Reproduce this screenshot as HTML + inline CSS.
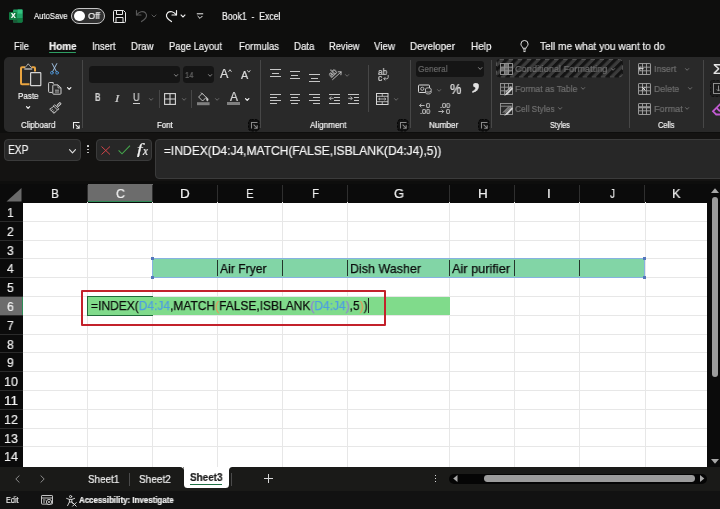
<!DOCTYPE html><html><head><meta charset="utf-8"><title>Book1 - Excel</title><style>
html,body{margin:0;padding:0;}
body{width:720px;height:509px;overflow:hidden;background:#0e0e0d;font-family:"Liberation Sans",sans-serif;position:relative;color:#fff;}
.a{position:absolute;}
.t{position:absolute;white-space:nowrap;line-height:1;transform-origin:0 50%;will-change:transform;-webkit-text-stroke:0.22px;}
svg{position:absolute;overflow:visible;}
</style></head><body>
<div class="a" style="left:3.7px;top:56.8px;width:730px;height:75.6px;background:#292929;border-radius:5px;"></div>
<div class="a" style="left:0px;top:132.5px;width:720px;height:48.5px;background:#141312;"></div>
<div class="a" style="left:0px;top:184px;width:720px;height:283px;background:#0a0a0a;"></div>
<div class="a" style="left:0px;top:467px;width:720px;height:23px;background:#141414;"></div>
<div class="a" style="left:0px;top:490px;width:720px;height:19px;background:#0b0b0b;"></div>
<svg style="left:9px;top:9px" width="14" height="14" viewBox="0 0 14 14">
<rect x="4" y="0.5" width="9.5" height="13" rx="1" fill="#21a366"/>
<rect x="8.7" y="0.5" width="4.8" height="4.3" fill="#33c481"/>
<rect x="8.7" y="4.8" width="4.8" height="4.3" fill="#21a366"/>
<rect x="8.7" y="9.1" width="4.8" height="4.4" rx="1" fill="#107c41"/>
<rect x="4" y="9.1" width="4.7" height="4.4" fill="#185c37"/>
<rect x="0" y="3" width="8" height="8" rx="1" fill="#107c41"/>
</svg>
<div class="a" style="left:71.3px;top:8px;width:32px;height:13.6px;border:1px solid #c4c4c4;border-radius:8px;background:#303030;"></div>
<div class="a" style="left:74.3px;top:10.7px;width:10.4px;height:10.4px;border-radius:50%;background:#fff;"></div>
<svg style="left:113px;top:10px" width="14" height="13" viewBox="0 0 14 13" fill="none" stroke="#e8e8e8" stroke-width="1">
<path d="M1.5 0.5 H10.5 L12.5 2.5 V11.5 A1 1 0 0 1 11.5 12.5 H1.5 A1 1 0 0 1 0.5 11.5 V1.5 A1 1 0 0 1 1.5 0.5 Z"/>
<path d="M3.5 0.5 V4.5 H9.5 V0.5"/>
<path d="M3 12.5 V7.5 H10 V12.5"/>
</svg>
<svg style="left:135px;top:9px" width="14" height="14" viewBox="0 0 14 14" fill="none" stroke="#585858" stroke-width="1.2" stroke-linecap="round" stroke-linejoin="round">
<path d="M1.5 1.5 V6 H6"/><path d="M1.8 5.8 C4 2.5 8 1.6 10.4 3.8 C12.6 6 11.5 9 9 10.8 L6.5 12.6"/>
</svg>
<svg style="left:150.5px;top:14px" width="6" height="4" viewBox="0 0 6 4" fill="none" stroke="#585858" stroke-width="1"><path d="M0.7 0.7 L3 3 L5.3 0.7"/></svg>
<svg style="left:164px;top:9px" width="14" height="14" viewBox="0 0 14 14" fill="none" stroke="#f0f0f0" stroke-width="1.2" stroke-linecap="round" stroke-linejoin="round">
<path d="M12.5 1.5 V6 H8"/><path d="M12.2 5.8 C10 2.5 6 1.6 3.6 3.8 C1.4 6 2.5 9 5 10.8 L7.5 12.6"/>
</svg>
<svg style="left:179.5px;top:14px" width="6" height="4" viewBox="0 0 6 4" fill="none" stroke="#f0f0f0" stroke-width="1.1"><path d="M0.7 0.7 L3 3 L5.3 0.7"/></svg>
<svg style="left:195.5px;top:13px" width="8" height="7" viewBox="0 0 8 7" fill="none" stroke="#f0f0f0" stroke-width="1"><path d="M0.8 0.8 H7.2"/><path d="M1.6 3 L4 5.4 L6.4 3"/></svg>
<div class="a" style="left:48.5px;top:52px;width:27.5px;height:1.3px;background:#2e9e63;border-radius:1px;"></div>
<svg style="left:519.6px;top:39.6px" width="9" height="12.5" viewBox="0 0 12 16.6" fill="none" stroke="#f0f0f0" stroke-width="1.25">
<path d="M3.8 11 C3.8 9 1.2 8 1.2 5.4 A4.8 4.8 0 0 1 10.8 5.4 C10.8 8 8.2 9 8.2 11 Z"/><path d="M4 13.2 H8 M4.6 15.4 H7.4"/>
</svg>
<svg style="left:19px;top:62px" width="24" height="26" viewBox="0 0 24 26" fill="none">
<path d="M6 5.2 H3 A1 1 0 0 0 2 6.2 V21.2 A1 1 0 0 0 3 22.2 H10.5" stroke="#e9a440" stroke-width="2"/>
<path d="M12.5 5.2 H15 A1 1 0 0 1 16 6.2 V9.5" stroke="#e9a440" stroke-width="2"/>
<path d="M5.3 7 H13.2" stroke="#9a9a9a" stroke-width="1.8"/>
<path d="M5.8 5.8 L7.6 3.8 L9.25 1.8 L10.9 3.8 L12.7 5.8" stroke="#c4c4c4" stroke-width="0.9"/>
<rect x="11.6" y="10.6" width="10.2" height="13" rx="0.6" stroke="#d4d4d4" stroke-width="1.2" fill="#2e2e2e"/>
</svg>
<svg style="left:26px;top:105.5px" width="4.2" height="3.4" viewBox="0 0 4.2 3.4" fill="none" stroke="#f2f2f2" stroke-width="1.2" stroke-linecap="round" stroke-linejoin="round"><path d="M0.5 0.6 L2.1 2.4 L3.7 0.6"/></svg>
<svg style="left:50px;top:63px" width="10" height="12" viewBox="0 0 10 12" fill="none" stroke-linecap="round">
<path d="M2.2 0.6 L6.4 8.6 M6.8 0.6 L2.6 8.6" stroke="#a9cdf0" stroke-width="0.9"/><circle cx="1.9" cy="9.8" r="1.35" stroke="#4d95d8" stroke-width="0.9"/><circle cx="7.1" cy="9.8" r="1.35" stroke="#4d95d8" stroke-width="0.9"/>
</svg>
<svg style="left:48px;top:82px" width="14" height="13" viewBox="0 0 14 13" fill="none" stroke="#d0d0d0" stroke-width="1">
<path d="M4.6 10.4 H1.4 A0.8 0.8 0 0 1 0.6 9.6 V1.3 A0.8 0.8 0 0 1 1.4 0.5 H5.2 V2"/>
<path d="M5.6 2.9 H10 L13 5.9 V11.4 A0.8 0.8 0 0 1 12.2 12.2 H5.6 A0.8 0.8 0 0 1 4.8 11.4 V3.7 A0.8 0.8 0 0 1 5.6 2.9 Z" fill="#2c2c2c"/>
<path d="M10 2.9 V5.9 H13" stroke-width="0.8"/><path d="M7 8.2 H11 M7 10 H11" stroke-width="0.8"/>
</svg>
<svg style="left:66.8px;top:87.4px" width="4.4" height="3.4" viewBox="0 0 4.4 3.4" fill="none" stroke="#f2f2f2" stroke-width="1.2" stroke-linecap="round" stroke-linejoin="round"><path d="M0.5 0.6 L2.2 2.4 L3.9000000000000004 0.6"/></svg>
<svg style="left:49px;top:101.5px" width="13" height="12" viewBox="0 0 13 12" fill="none" stroke="#cfcfcf" stroke-width="0.9" stroke-linejoin="round" stroke-linecap="round">
<path d="M11.6 1 L8.6 4"/><path d="M10.9 0.6 L12.2 1.9 L9.4 4.7 L8.1 3.4 Z" fill="#777"/>
<path d="M5.9 3 L9.8 6.9 L8.6 8.1 L4.7 4.2 Z"/>
<path d="M4.7 4.4 L0.7 7.2 L5.2 11.3 L8.4 8"/><path d="M2.2 8.5 L3.6 7.3 M3.6 9.8 L5 8.6 M5 10.9 L6.2 9.8" stroke-width="0.7"/>
</svg>
<svg style="left:73px;top:122px" width="7" height="7" viewBox="0 0 7 7" fill="none" stroke="#f0f0f0" stroke-width="1.05"><path d="M6.5 0.5 H0.5 V6.5"/><path d="M2.6 2.6 L6 6 M6.2 3.2 V6.2 H3.2"/></svg>
<div class="a" style="left:81.5px;top:60px;width:1px;height:68.19999999999999px;background:#474747;"></div>
<div class="a" style="left:88.5px;top:66.3px;width:91.5px;height:16.5px;background:#151515;border-radius:3.5px;"></div>
<svg style="left:173.6px;top:74px" width="4.2" height="3.3" viewBox="0 0 4.2 3.3" fill="none" stroke="#8a8a8a" stroke-width="1" stroke-linecap="round" stroke-linejoin="round"><path d="M0.5 0.6 L2.1 2.3 L3.7 0.6"/></svg>
<div class="a" style="left:182.8px;top:66.3px;width:31px;height:16.5px;background:#151515;border-radius:3.5px;"></div>
<svg style="left:207.8px;top:74px" width="4.2" height="3.3" viewBox="0 0 4.2 3.3" fill="none" stroke="#8a8a8a" stroke-width="1" stroke-linecap="round" stroke-linejoin="round"><path d="M0.5 0.6 L2.1 2.3 L3.7 0.6"/></svg>
<svg style="left:227.5px;top:69px" width="4" height="3.4" viewBox="0 0 4 3.4"><rect width="4" height="3.4" fill="#292929"/><path d="M0.5 2.8 L2 0.7 L3.5 2.8" fill="none" stroke="#dcdcdc" stroke-width="0.9"/></svg>
<svg style="left:247.2px;top:69.6px" width="3.6" height="3.2" viewBox="0 0 3.6 3.2" fill="none" stroke="#dcdcdc" stroke-width="0.9" stroke-linecap="round" stroke-linejoin="round"><path d="M0.5 0.6 L1.8 2.2 L3.1 0.6"/></svg>
<div class="a" style="left:132.8px;top:103.4px;width:7.2px;height:0.9px;background:#cfcfcf;"></div>
<svg style="left:148.8px;top:98px" width="4.2" height="3.3" viewBox="0 0 4.2 3.3" fill="none" stroke="#6a6a6a" stroke-width="1" stroke-linecap="round" stroke-linejoin="round"><path d="M0.5 0.6 L2.1 2.3 L3.7 0.6"/></svg>
<div class="a" style="left:158.5px;top:90px;width:1px;height:17.5px;background:#474747;"></div>
<svg style="left:163.5px;top:93px" width="12" height="12" viewBox="0 0 12 12" fill="none" stroke="#d6d6d6" stroke-width="1.1"><rect x="0.6" y="0.6" width="10.8" height="10.8"/><path d="M6 0.6 V11.4 M0.6 6 H11.4"/></svg>
<svg style="left:181.6px;top:98px" width="4.2" height="3.3" viewBox="0 0 4.2 3.3" fill="none" stroke="#6a6a6a" stroke-width="1" stroke-linecap="round" stroke-linejoin="round"><path d="M0.5 0.6 L2.1 2.3 L3.7 0.6"/></svg>
<div class="a" style="left:191px;top:90px;width:1px;height:17.5px;background:#474747;"></div>
<svg style="left:196.5px;top:92px" width="13" height="13.5" viewBox="0 0 13 13.5" fill="none" stroke="#d0d0d0" stroke-width="0.9" stroke-linejoin="round">
<path d="M5.2 1.4 L9.2 5.4 L5.6 9 L1.6 5 Z"/><path d="M4 0.6 L5.8 2.4"/><path d="M9.3 5 C11 6.4 11.6 7.4 11 8.6 C10.4 9.2 9.6 8.8 9.6 8 Z" fill="#d0d0d0" stroke-width="0.5"/>
<rect x="0" y="10.2" width="12.6" height="3" fill="#808080" stroke="none"/>
</svg>
<svg style="left:214.6px;top:98px" width="4.2" height="3.3" viewBox="0 0 4.2 3.3" fill="none" stroke="#6a6a6a" stroke-width="1" stroke-linecap="round" stroke-linejoin="round"><path d="M0.5 0.6 L2.1 2.3 L3.7 0.6"/></svg>
<div class="a" style="left:227.3px;top:102.2px;width:12.7px;height:3px;background:#808080;"></div>
<svg style="left:245.4px;top:98px" width="4.4" height="3.4" viewBox="0 0 4.4 3.4" fill="none" stroke="#f2f2f2" stroke-width="1.2" stroke-linecap="round" stroke-linejoin="round"><path d="M0.5 0.6 L2.2 2.4 L3.9000000000000004 0.6"/></svg>
<svg style="left:247.7px;top:119px" width="12" height="12.5" viewBox="0 0 12 12.5"><rect x="0.5" y="0.5" width="10.6" height="11.5" rx="3" fill="#121212" stroke="#050505" stroke-width="1" stroke-dasharray="2.2 1.4"/></svg>
<svg style="left:251px;top:122px" width="7" height="7" viewBox="0 0 7 7" fill="none" stroke="#8a8a8a" stroke-width="1.05"><path d="M6.5 0.5 H0.5 V6.5"/><path d="M2.6 2.6 L6 6 M6.2 3.2 V6.2 H3.2"/></svg>
<div class="a" style="left:259.5px;top:60px;width:1px;height:68.19999999999999px;background:#474747;"></div>
<div class="a" style="left:270.0px;top:69.3px;width:10.6px;height:1px;background:#c6c6c6;"></div>
<div class="a" style="left:271.8px;top:72.5px;width:7px;height:1px;background:#c6c6c6;"></div>
<div class="a" style="left:270.0px;top:75.7px;width:10.6px;height:1px;background:#c6c6c6;"></div>
<div class="a" style="left:289.5px;top:71.3px;width:10.6px;height:1px;background:#c6c6c6;"></div>
<div class="a" style="left:291.3px;top:74.5px;width:7px;height:1px;background:#c6c6c6;"></div>
<div class="a" style="left:289.5px;top:77.7px;width:10.6px;height:1px;background:#c6c6c6;"></div>
<div class="a" style="left:309.3px;top:74.3px;width:10.6px;height:1px;background:#c6c6c6;"></div>
<div class="a" style="left:311.1px;top:77.5px;width:7px;height:1px;background:#c6c6c6;"></div>
<div class="a" style="left:309.3px;top:80.7px;width:10.6px;height:1px;background:#c6c6c6;"></div>
<svg style="left:327.5px;top:68px" width="14" height="13" viewBox="0 0 14 13" fill="none" stroke="#c6c6c6" stroke-width="0.9" stroke-linecap="round">
<path d="M4.6 11.6 L13 4"/><path d="M10.2 3.8 L13.2 3.8 L12.9 6.8"/>
</svg>
<svg style="left:345.3px;top:74px" width="4.2" height="3.3" viewBox="0 0 4.2 3.3" fill="none" stroke="#6a6a6a" stroke-width="1" stroke-linecap="round" stroke-linejoin="round"><path d="M0.5 0.6 L2.1 2.3 L3.7 0.6"/></svg>
<div class="a" style="left:270px;top:93.5px;width:10.6px;height:1px;background:#c6c6c6;"></div>
<div class="a" style="left:270px;top:96.6px;width:7.4px;height:1px;background:#c6c6c6;"></div>
<div class="a" style="left:270px;top:99.7px;width:10.6px;height:1px;background:#c6c6c6;"></div>
<div class="a" style="left:270px;top:102.8px;width:7.4px;height:1px;background:#c6c6c6;"></div>
<div class="a" style="left:289.5px;top:93.5px;width:10.6px;height:1px;background:#c6c6c6;"></div>
<div class="a" style="left:291.1px;top:96.6px;width:7.4px;height:1px;background:#c6c6c6;"></div>
<div class="a" style="left:289.5px;top:99.7px;width:10.6px;height:1px;background:#c6c6c6;"></div>
<div class="a" style="left:291.1px;top:102.8px;width:7.4px;height:1px;background:#c6c6c6;"></div>
<div class="a" style="left:309.3px;top:93.5px;width:10.6px;height:1px;background:#c6c6c6;"></div>
<div class="a" style="left:312.5px;top:96.6px;width:7.4px;height:1px;background:#c6c6c6;"></div>
<div class="a" style="left:309.3px;top:99.7px;width:10.6px;height:1px;background:#c6c6c6;"></div>
<div class="a" style="left:312.5px;top:102.8px;width:7.4px;height:1px;background:#c6c6c6;"></div>
<div class="a" style="left:328.8px;top:93.5px;width:11.2px;height:1px;background:#c6c6c6;"></div>
<div class="a" style="left:334.4px;top:96.6px;width:5.6px;height:1px;background:#c6c6c6;"></div>
<div class="a" style="left:334.4px;top:99.7px;width:5.6px;height:1px;background:#c6c6c6;"></div>
<div class="a" style="left:328.8px;top:102.8px;width:11.2px;height:1px;background:#c6c6c6;"></div>
<svg style="left:328.8px;top:96.4px" width="5" height="4.6" viewBox="0 0 5 4.6" fill="none" stroke="#c6c6c6" stroke-width="0.9"><path d="M4.6 2.3 H0.6 M2.2 0.5 L0.5 2.3 L2.2 4.1"/></svg>
<div class="a" style="left:348.2px;top:93.5px;width:11.2px;height:1px;background:#c6c6c6;"></div>
<div class="a" style="left:353.8px;top:96.6px;width:5.6px;height:1px;background:#c6c6c6;"></div>
<div class="a" style="left:353.8px;top:99.7px;width:5.6px;height:1px;background:#c6c6c6;"></div>
<div class="a" style="left:348.2px;top:102.8px;width:11.2px;height:1px;background:#c6c6c6;"></div>
<svg style="left:348.2px;top:96.4px" width="5" height="4.6" viewBox="0 0 5 4.6" fill="none" stroke="#c6c6c6" stroke-width="0.9"><path d="M0.2 2.3 H4.2 M2.6 0.5 L4.3 2.3 L2.6 4.1"/></svg>
<div class="a" style="left:368.1px;top:64.5px;width:1px;height:47.5px;background:#474747;"></div>
<svg style="left:382.6px;top:74.5px" width="6" height="6.5" viewBox="0 0 6 6.5" fill="none" stroke="#d6d6d6" stroke-width="0.8"><path d="M5.2 0 V2.4 A1.4 1.4 0 0 1 3.8 3.8 H0.8"/><path d="M2.3 2.2 L0.7 3.8 L2.3 5.4"/></svg>
<svg style="left:375.5px;top:93px" width="12.5" height="12" viewBox="0 0 12.5 12" fill="none" stroke="#d6d6d6" stroke-width="1">
<rect x="0.5" y="0.5" width="11.5" height="11"/><path d="M0.5 3.3 H12 M0.5 8.7 H12 M6.25 0.5 V3.3 M6.25 8.7 V11.5" stroke-width="0.8"/>
<path d="M2.6 6 H9.9 M4 4.8 L2.7 6 L4 7.2 M8.5 4.8 L9.8 6 L8.5 7.2" stroke-width="0.8"/></svg>
<svg style="left:394px;top:98.4px" width="4.2" height="3.3" viewBox="0 0 4.2 3.3" fill="none" stroke="#6a6a6a" stroke-width="1" stroke-linecap="round" stroke-linejoin="round"><path d="M0.5 0.6 L2.1 2.3 L3.7 0.6"/></svg>
<svg style="left:396.7px;top:119px" width="12" height="12.5" viewBox="0 0 12 12.5"><rect x="0.5" y="0.5" width="10.6" height="11.5" rx="3" fill="#121212" stroke="#050505" stroke-width="1" stroke-dasharray="2.2 1.4"/></svg>
<svg style="left:400px;top:122px" width="7" height="7" viewBox="0 0 7 7" fill="none" stroke="#8a8a8a" stroke-width="1.05"><path d="M6.5 0.5 H0.5 V6.5"/><path d="M2.6 2.6 L6 6 M6.2 3.2 V6.2 H3.2"/></svg>
<div class="a" style="left:409.5px;top:60px;width:1px;height:68.19999999999999px;background:#474747;"></div>
<div class="a" style="left:415.5px;top:60.5px;width:68.5px;height:16px;background:#151515;border-radius:3px;"></div>
<svg style="left:478px;top:67.4px" width="4.4" height="3.4" viewBox="0 0 4.4 3.4" fill="none" stroke="#8a8a8a" stroke-width="1" stroke-linecap="round" stroke-linejoin="round"><path d="M0.5 0.6 L2.2 2.4 L3.9000000000000004 0.6"/></svg>
<svg style="left:418px;top:84px" width="14" height="11" viewBox="0 0 14 11" fill="none" stroke="#d6d6d6" stroke-width="1">
<rect x="0.5" y="1" width="11" height="7.5" rx="0.8"/><circle cx="4.3" cy="4.8" r="1.6" stroke-width="0.8"/>
<ellipse cx="10.3" cy="5" rx="2.8" ry="1.2" fill="#292929" stroke-width="0.8"/><path d="M7.5 5 V8.8 C7.5 10.4 13.1 10.4 13.1 8.8 V5 M7.5 7 C7.5 8.5 13.1 8.5 13.1 7" stroke-width="0.8" fill="#292929"/></svg>
<svg style="left:436.7px;top:88.6px" width="4.2" height="3.3" viewBox="0 0 4.2 3.3" fill="none" stroke="#6a6a6a" stroke-width="1" stroke-linecap="round" stroke-linejoin="round"><path d="M0.5 0.6 L2.1 2.3 L3.7 0.6"/></svg>
<svg style="left:418.8px;top:103.3px" width="6" height="5" viewBox="0 0 6 5" fill="none" stroke="#d6d6d6" stroke-width="0.8"><path d="M0.6 2.5 H5.6 M2.4 0.7 L0.6 2.5 L2.4 4.3"/></svg>
<svg style="left:438px;top:109.2px" width="6.5" height="5" viewBox="0 0 6.5 5" fill="none" stroke="#d6d6d6" stroke-width="0.8"><path d="M0.4 2.5 H5.6 M3.8 0.7 L5.6 2.5 L3.8 4.3"/></svg>
<svg style="left:477.7px;top:119px" width="12" height="12.5" viewBox="0 0 12 12.5"><rect x="0.5" y="0.5" width="10.6" height="11.5" rx="3" fill="#121212" stroke="#050505" stroke-width="1" stroke-dasharray="2.2 1.4"/></svg>
<svg style="left:481px;top:122px" width="7" height="7" viewBox="0 0 7 7" fill="none" stroke="#8a8a8a" stroke-width="1.05"><path d="M6.5 0.5 H0.5 V6.5"/><path d="M2.6 2.6 L6 6 M6.2 3.2 V6.2 H3.2"/></svg>
<div class="a" style="left:490.5px;top:60px;width:1px;height:68.19999999999999px;background:#474747;"></div>
<svg style="left:496px;top:59.2px" width="127" height="18.4" viewBox="0 0 127 18.4">
<defs><pattern id="hatch" width="6.4" height="6.4" patternUnits="userSpaceOnUse" patternTransform="rotate(45)"><rect width="6.4" height="6.4" fill="#3b3b3b"/><rect width="3.2" height="6.4" fill="#131313"/></pattern></defs>
<rect x="0.5" y="0.5" width="126" height="17.4" rx="3" fill="url(#hatch)"/>
<rect x="0.5" y="0.5" width="126" height="17.4" rx="3" fill="none" stroke="#161616" stroke-width="1"/>
<rect x="0.5" y="0.5" width="126" height="17.4" rx="3" fill="none" stroke="#5c5c5c" stroke-width="0.9" stroke-dasharray="4.5 4.6"/></svg>
<svg style="left:499.5px;top:63px" width="13" height="12" viewBox="0 0 13 12" fill="none" stroke="#9a9a9a" stroke-width="0.9">
<rect x="0.5" y="0.5" width="12" height="11"/><path d="M4.5 0.5 V11.5 M8.5 0.5 V11.5 M0.5 4.2 H12.5 M0.5 7.8 H12.5"/><rect x="4.5" y="0.5" width="4" height="11" fill="#8a8a8a" stroke="none" opacity="0.7"/><rect x="0.5" y="4.2" width="4" height="3.6" fill="#8a8a8a" stroke="none" opacity="0.7"/></svg>
<svg style="left:611px;top:67.6px" width="4.2" height="3.3" viewBox="0 0 4.2 3.3" fill="none" stroke="#6e6e6e" stroke-width="1" stroke-linecap="round" stroke-linejoin="round"><path d="M0.5 0.6 L2.1 2.3 L3.7 0.6"/></svg>
<svg style="left:499.5px;top:83px" width="13" height="12" viewBox="0 0 13 12" fill="none" stroke="#9a9a9a" stroke-width="0.9">
<rect x="0.5" y="0.5" width="12" height="11"/><path d="M4.5 0.5 V11.5 M8.5 0.5 V6 M0.5 4.2 H12.5 M0.5 7.8 H7"/><path d="M12.3 4.5 L6.5 10.3 L5.6 11.6 L7.2 11 L12.8 5.4" stroke-width="1.1" stroke="#d0d0d0"/><path d="M11.3 3.5 L5.5 9.3" stroke-width="1.1" stroke="#b8b8b8"/></svg>
<svg style="left:581px;top:87.4px" width="4.2" height="3.3" viewBox="0 0 4.2 3.3" fill="none" stroke="#6e6e6e" stroke-width="1" stroke-linecap="round" stroke-linejoin="round"><path d="M0.5 0.6 L2.1 2.3 L3.7 0.6"/></svg>
<svg style="left:499.5px;top:102.5px" width="13" height="12" viewBox="0 0 13 12" fill="none" stroke="#9a9a9a" stroke-width="0.9">
<rect x="0.5" y="0.5" width="12" height="11"/><path d="M0.5 3.2 H12.5"/><path d="M12.3 4.5 L6.5 10.3 L5.6 11.6 L7.2 11 L12.8 5.4" stroke-width="1.1" stroke="#d0d0d0"/><path d="M11 3.6 L4.5 10 M9 3.6 L3 9.6" stroke-width="1" stroke="#b8b8b8"/></svg>
<svg style="left:557.6px;top:107px" width="4.2" height="3.3" viewBox="0 0 4.2 3.3" fill="none" stroke="#6e6e6e" stroke-width="1" stroke-linecap="round" stroke-linejoin="round"><path d="M0.5 0.6 L2.1 2.3 L3.7 0.6"/></svg>
<div class="a" style="left:629px;top:60px;width:1px;height:68.19999999999999px;background:#474747;"></div>
<svg style="left:638px;top:63.3px" width="13" height="12" viewBox="0 0 13 12" fill="none" stroke="#a4a4a4" stroke-width="0.9">
<rect x="0.5" y="0.5" width="12" height="11" rx="0.6"/><path d="M4.5 0.5 V11.5 M8.5 0.5 V11.5 M0.5 4.2 H12.5 M0.5 7.8 H12.5"/><path d="M5.6 5.6 H1 M2.6 4 L0.9 5.6 L2.6 7.2" stroke="#e0e0e0" stroke-width="0.9"/></svg>
<svg style="left:685.4px;top:67.6px" width="4.2" height="3.3" viewBox="0 0 4.2 3.3" fill="none" stroke="#6e6e6e" stroke-width="1" stroke-linecap="round" stroke-linejoin="round"><path d="M0.5 0.6 L2.1 2.3 L3.7 0.6"/></svg>
<svg style="left:638px;top:83px" width="13" height="12" viewBox="0 0 13 12" fill="none" stroke="#a4a4a4" stroke-width="0.9">
<rect x="0.5" y="0.5" width="12" height="11" rx="0.6"/><path d="M4.5 0.5 V11.5 M8.5 0.5 V11.5 M0.5 4.2 H12.5 M0.5 7.8 H12.5"/><path d="M4 4 L7.4 7.4 M7.4 4 L4 7.4" stroke="#e0e0e0" stroke-width="1"/></svg>
<svg style="left:688.4px;top:87.4px" width="4.2" height="3.3" viewBox="0 0 4.2 3.3" fill="none" stroke="#6e6e6e" stroke-width="1" stroke-linecap="round" stroke-linejoin="round"><path d="M0.5 0.6 L2.1 2.3 L3.7 0.6"/></svg>
<svg style="left:638px;top:102.5px" width="13" height="12" viewBox="0 0 13 12" fill="none" stroke="#a4a4a4" stroke-width="0.9">
<rect x="0.5" y="0.5" width="12" height="11" rx="0.6"/><path d="M4.5 0.5 V11.5 M8.5 0.5 V11.5 M0.5 4.2 H12.5 M0.5 7.8 H12.5"/><rect x="0.8" y="3.3" width="11.4" height="2" fill="#999" stroke="none"/></svg>
<svg style="left:685.4px;top:107px" width="4.2" height="3.3" viewBox="0 0 4.2 3.3" fill="none" stroke="#6e6e6e" stroke-width="1" stroke-linecap="round" stroke-linejoin="round"><path d="M0.5 0.6 L2.1 2.3 L3.7 0.6"/></svg>
<div class="a" style="left:703px;top:60px;width:1px;height:68.19999999999999px;background:#474747;"></div>
<svg style="left:709.5px;top:80px" width="12" height="17" viewBox="0 0 12 17"><rect x="0.5" y="0.5" width="14" height="16" rx="2" fill="#1c1c1c" stroke="#111" stroke-dasharray="2.5 1.5"/><rect x="3.5" y="3.5" width="10" height="10" fill="none" stroke="#9a9a9a" stroke-width="0.9"/><path d="M8.5 5.5 V11 M6.8 9.4 L8.5 11.1 L10.2 9.4" fill="none" stroke="#9a9a9a" stroke-width="0.9"/></svg>
<svg style="left:712px;top:103px" width="8" height="12" viewBox="0 0 8 12" fill="none" stroke="#c25bd2" stroke-width="1.8"><path d="M8.5 0.8 L1 8.3 L4.2 11.5 H9"/><path d="M4.5 4.8 L8 8.3"/></svg>
<div class="a" style="left:3.5px;top:138.5px;width:77px;height:22px;background:#272727;border:1px solid #3b3b3b;box-sizing:border-box;border-radius:4px;"></div>
<svg style="left:69px;top:148.8px" width="7" height="4.8" viewBox="0 0 7 4.8" fill="none" stroke="#e0e0e0" stroke-width="1.1" stroke-linecap="round" stroke-linejoin="round"><path d="M0.5 0.6 L3.5 3.8 L6.5 0.6"/></svg>
<div class="a" style="left:87.2px;top:145.4px;width:1.8px;height:1.8px;background:#d8d8d8;border-radius:0.5px;"></div>
<div class="a" style="left:87.2px;top:148.5px;width:1.8px;height:1.8px;background:#d8d8d8;border-radius:0.5px;"></div>
<div class="a" style="left:87.2px;top:151.6px;width:1.8px;height:1.8px;background:#d8d8d8;border-radius:0.5px;"></div>
<div class="a" style="left:95.7px;top:138.5px;width:56px;height:22px;background:#272727;border:1px solid #3b3b3b;box-sizing:border-box;border-radius:4px;"></div>
<svg style="left:100.7px;top:145.5px" width="9.5" height="9" viewBox="0 0 9.5 9" fill="none" stroke="#d8454a" stroke-width="0.95"><path d="M0.5 0.5 L9 8.5 M9 0.5 L0.5 8.5"/></svg>
<svg style="left:117.5px;top:145px" width="12.5" height="9.5" viewBox="0 0 12.5 9.5" fill="none" stroke="#45a84c" stroke-width="1.05"><path d="M0.6 5.4 L4 8.8 L12 0.6"/></svg>
<div class="a" style="left:154.5px;top:138.5px;width:580px;height:40.7px;background:#272727;border:1px solid #3b3b3b;box-sizing:border-box;border-radius:4px;"></div>
<div class="a" style="left:23px;top:202.70000000000002px;width:684px;height:264.3px;background:#fff;"></div>
<div class="a" style="left:0px;top:184.2px;width:707px;height:18.6px;background:#0b0b0b;"></div>
<div class="a" style="left:87.5px;top:184.3px;width:65px;height:18.1px;background:#6c6c6c;border-bottom:1.3px solid #2e8b57;box-sizing:border-box;"></div>
<div class="a" style="left:87px;top:185px;width:1px;height:17px;background:#2f2f2f;"></div>
<div class="a" style="left:152px;top:185px;width:1px;height:17px;background:#2f2f2f;"></div>
<div class="a" style="left:217px;top:185px;width:1px;height:17px;background:#2f2f2f;"></div>
<div class="a" style="left:282px;top:185px;width:1px;height:17px;background:#2f2f2f;"></div>
<div class="a" style="left:347px;top:185px;width:1px;height:17px;background:#2f2f2f;"></div>
<div class="a" style="left:449px;top:185px;width:1px;height:17px;background:#2f2f2f;"></div>
<div class="a" style="left:514px;top:185px;width:1px;height:17px;background:#2f2f2f;"></div>
<div class="a" style="left:579px;top:185px;width:1px;height:17px;background:#2f2f2f;"></div>
<div class="a" style="left:644px;top:185px;width:1px;height:17px;background:#2f2f2f;"></div>
<svg style="left:6px;top:188px" width="16" height="14" viewBox="0 0 16 14"><path d="M15.5 0 V13.5 H0.5 Z" fill="#6a6a6a"/></svg>
<div class="a" style="left:0px;top:202.4px;width:23px;height:264.6px;background:#0b0b0b;"></div>
<div class="a" style="left:0px;top:296.4px;width:23px;height:18.8px;background:#6c6c6c;border-right:1.3px solid #2e8b57;box-sizing:border-box;"></div>
<div class="a" style="left:0px;top:220.70000000000002px;width:23px;height:1px;background:#2b2b2b;"></div>
<div class="a" style="left:0px;top:239.5px;width:23px;height:1px;background:#2b2b2b;"></div>
<div class="a" style="left:0px;top:258.3px;width:23px;height:1px;background:#2b2b2b;"></div>
<div class="a" style="left:0px;top:277.1px;width:23px;height:1px;background:#2b2b2b;"></div>
<div class="a" style="left:0px;top:295.9px;width:23px;height:1px;background:#2b2b2b;"></div>
<div class="a" style="left:0px;top:314.70000000000005px;width:23px;height:1px;background:#2b2b2b;"></div>
<div class="a" style="left:0px;top:333.5px;width:23px;height:1px;background:#2b2b2b;"></div>
<div class="a" style="left:0px;top:352.3px;width:23px;height:1px;background:#2b2b2b;"></div>
<div class="a" style="left:0px;top:371.1px;width:23px;height:1px;background:#2b2b2b;"></div>
<div class="a" style="left:0px;top:389.9px;width:23px;height:1px;background:#2b2b2b;"></div>
<div class="a" style="left:0px;top:408.70000000000005px;width:23px;height:1px;background:#2b2b2b;"></div>
<div class="a" style="left:0px;top:427.5px;width:23px;height:1px;background:#2b2b2b;"></div>
<div class="a" style="left:0px;top:446.3px;width:23px;height:1px;background:#2b2b2b;"></div>
<div class="a" style="left:23px;top:221px;width:684px;height:1px;background:#e7e7e7;"></div>
<div class="a" style="left:23px;top:240px;width:684px;height:1px;background:#e7e7e7;"></div>
<div class="a" style="left:23px;top:258px;width:684px;height:1px;background:#e7e7e7;"></div>
<div class="a" style="left:23px;top:277px;width:684px;height:1px;background:#e7e7e7;"></div>
<div class="a" style="left:23px;top:296px;width:684px;height:1px;background:#e7e7e7;"></div>
<div class="a" style="left:23px;top:315px;width:684px;height:1px;background:#e7e7e7;"></div>
<div class="a" style="left:23px;top:334px;width:684px;height:1px;background:#e7e7e7;"></div>
<div class="a" style="left:23px;top:352px;width:684px;height:1px;background:#e7e7e7;"></div>
<div class="a" style="left:23px;top:371px;width:684px;height:1px;background:#e7e7e7;"></div>
<div class="a" style="left:23px;top:390px;width:684px;height:1px;background:#e7e7e7;"></div>
<div class="a" style="left:23px;top:409px;width:684px;height:1px;background:#e7e7e7;"></div>
<div class="a" style="left:23px;top:428px;width:684px;height:1px;background:#e7e7e7;"></div>
<div class="a" style="left:23px;top:446px;width:684px;height:1px;background:#e7e7e7;"></div>
<div class="a" style="left:87px;top:202.4px;width:1px;height:264.6px;background:#e7e7e7;"></div>
<div class="a" style="left:152px;top:202.4px;width:1px;height:264.6px;background:#e7e7e7;"></div>
<div class="a" style="left:217px;top:202.4px;width:1px;height:264.6px;background:#e7e7e7;"></div>
<div class="a" style="left:282px;top:202.4px;width:1px;height:264.6px;background:#e7e7e7;"></div>
<div class="a" style="left:347px;top:202.4px;width:1px;height:264.6px;background:#e7e7e7;"></div>
<div class="a" style="left:449px;top:202.4px;width:1px;height:264.6px;background:#e7e7e7;"></div>
<div class="a" style="left:514px;top:202.4px;width:1px;height:264.6px;background:#e7e7e7;"></div>
<div class="a" style="left:579px;top:202.4px;width:1px;height:264.6px;background:#e7e7e7;"></div>
<div class="a" style="left:645px;top:202.4px;width:1px;height:264.6px;background:#e7e7e7;"></div>
<div class="a" style="left:153px;top:258.6px;width:491.5px;height:19.3px;background:#82d5a6;"></div>
<div class="a" style="left:217px;top:260.0px;width:1px;height:16.400000000000002px;background:#24362b;"></div>
<div class="a" style="left:282px;top:260.0px;width:1px;height:16.400000000000002px;background:#24362b;"></div>
<div class="a" style="left:347px;top:260.0px;width:1px;height:16.400000000000002px;background:#24362b;"></div>
<div class="a" style="left:449px;top:260.0px;width:1px;height:16.400000000000002px;background:#24362b;"></div>
<div class="a" style="left:514px;top:260.0px;width:1px;height:16.400000000000002px;background:#24362b;"></div>
<div class="a" style="left:579px;top:260.0px;width:1px;height:16.400000000000002px;background:#24362b;"></div>
<div class="a" style="left:152.3px;top:258.2px;width:492.5px;height:20.2px;border:1.2px solid #86b2e0;box-sizing:border-box;"></div>
<div class="a" style="left:151.3px;top:257.2px;width:3px;height:3px;background:#5577bb;"></div>
<div class="a" style="left:642.8px;top:257.2px;width:3px;height:3px;background:#5577bb;"></div>
<div class="a" style="left:151.3px;top:276.40000000000003px;width:3px;height:3px;background:#5577bb;"></div>
<div class="a" style="left:642.8px;top:276.40000000000003px;width:3px;height:3px;background:#5577bb;"></div>
<div class="a" style="left:87px;top:296.79999999999995px;width:363px;height:18.2px;background:#80db8b;"></div>
<div class="a" style="left:86.7px;top:296.0px;width:66.3px;height:19.6px;border:1px solid #1f6b3a;border-right:none;box-sizing:border-box;"></div>
<div class="a" style="left:368.3px;top:298.4px;width:1px;height:14.8px;background:#222;"></div>
<div class="a" style="left:80.6px;top:290.3px;width:305.5px;height:36.2px;border:2.5px solid #c3212b;box-sizing:border-box;border-radius:1px;"></div>
<div class="a" style="left:707px;top:184px;width:13px;height:283px;background:#0b0b0b;"></div>
<svg style="left:711px;top:188px" width="8" height="5" viewBox="0 0 8 5"><path d="M0 5 L4 0.3 L8 5 Z" fill="#a8a8a8"/></svg>
<div class="a" style="left:711.8px;top:197.3px;width:6.4px;height:180.2px;background:#9c9c9c;border-radius:3.2px;"></div>
<svg style="left:711px;top:458.5px" width="8" height="5" viewBox="0 0 8 5"><path d="M0 0 L4 4.7 L8 0 Z" fill="#a8a8a8"/></svg>
<div class="a" style="left:0px;top:467px;width:720px;height:24px;background:#1a1a18;"></div>
<svg style="left:15px;top:474.5px" width="5" height="8" viewBox="0 0 5 8" fill="none" stroke="#8a8a8a" stroke-width="1"><path d="M4.4 0.5 L0.8 4 L4.4 7.5"/></svg>
<svg style="left:40px;top:474.5px" width="5" height="8" viewBox="0 0 5 8" fill="none" stroke="#8a8a8a" stroke-width="1"><path d="M0.6 0.5 L4.2 4 L0.6 7.5"/></svg>
<div class="a" style="left:128.5px;top:472.5px;width:1px;height:13.0px;background:#4a4a4a;"></div>
<div class="a" style="left:183.7px;top:467px;width:45.5px;height:21px;background:#fff;border-radius:0 0 3.5px 3.5px;"></div>
<svg style="left:180.2px;top:467px" width="52.5" height="4" viewBox="0 0 52.5 4"><path d="M0 0 H3.5 V3.5 A3.5 3.5 0 0 0 0 0 Z M52.5 0 H49 V3.5 A3.5 3.5 0 0 1 52.5 0 Z" fill="#fff"/></svg>
<div class="a" style="left:189.5px;top:483.8px;width:32.5px;height:1.5px;background:#1e7145;"></div>
<div class="a" style="left:231px;top:472.5px;width:1px;height:13.0px;background:#4a4a4a;"></div>
<svg style="left:264px;top:473.7px" width="9" height="9" viewBox="0 0 9 9" fill="none" stroke="#d8d8d8" stroke-width="1"><path d="M4.5 0 V9 M0 4.5 H9"/></svg>
<div class="a" style="left:434.6px;top:475.2px;width:1.2px;height:1.2px;background:#d8d8d8;"></div>
<div class="a" style="left:434.6px;top:478.09999999999997px;width:1.2px;height:1.2px;background:#d8d8d8;"></div>
<div class="a" style="left:434.6px;top:481.0px;width:1.2px;height:1.2px;background:#d8d8d8;"></div>
<div class="a" style="left:449px;top:473.5px;width:257.5px;height:10.5px;background:#050505;border-radius:5.3px;"></div>
<svg style="left:452.5px;top:475.3px" width="4.5" height="7" viewBox="0 0 4.5 7"><path d="M4.5 0 V7 L0.2 3.5 Z" fill="#a8a8a8"/></svg>
<div class="a" style="left:484px;top:475.4px;width:211px;height:6.8px;background:#9c9c9c;border-radius:3.4px;"></div>
<svg style="left:699.8px;top:475.3px" width="4.5" height="7" viewBox="0 0 4.5 7"><path d="M0 0 V7 L4.3 3.5 Z" fill="#a8a8a8"/></svg>
<div class="a" style="left:0px;top:490.7px;width:720px;height:18.3px;background:#121212;"></div>
<svg style="left:41px;top:495px" width="12" height="10.5" viewBox="0 0 12 10.5" fill="none" stroke="#d8d8d8" stroke-width="0.9"><rect x="0.5" y="0.5" width="11" height="8.6" rx="0.6"/><path d="M0.5 3 H11.5 M2 5 H4.5 M2 7 H4"/><circle cx="8" cy="7" r="2.6" fill="#121212"/><circle cx="8" cy="7" r="0.9" fill="#d8d8d8" stroke="none"/></svg>
<svg style="left:65.5px;top:494.5px" width="11" height="11.5" viewBox="0 0 11 11.5" fill="none" stroke="#e0e0e0" stroke-width="0.9" stroke-linecap="round"><circle cx="4.6" cy="1.6" r="1.1"/><path d="M0.6 3.4 L3.4 4.4 H5.8 L8.6 3.4 M3.4 4.4 V7 L1.6 10.6 M5.8 4.4 V7 L6.6 8.4 M3.4 7 H5.8"/><path d="M6.6 7.6 L10.2 11.2 M10.2 7.6 L6.6 11.2" stroke-width="1"/></svg>
<span class="t" id="t0" style="left:10.7px;top:12.8px;font-size:6.6px;color:#fff;font-weight:bold;transform:scaleX(1.044);">X</span>
<span class="t" id="t1" style="left:33.5px;top:11.2px;font-size:9.5px;color:#f0f0f0;font-weight:normal;transform:scaleX(0.813);">AutoSave</span>
<span class="t" id="t2" style="left:87.5px;top:11.4px;font-size:9.5px;color:#f0f0f0;font-weight:normal;transform:scaleX(0.960);">Off</span>
<span class="t" id="t3" style="left:221.5px;top:10.8px;font-size:10.5px;color:#f0f0f0;font-weight:normal;transform:scaleX(0.828);">Book1&nbsp; -&nbsp; Excel</span>
<span class="t" id="t4" style="left:13.5px;top:40.8px;font-size:11px;color:#f2f2f2;font-weight:normal;transform:scaleX(0.846);">File</span>
<span class="t" id="t5" style="left:48.5px;top:40.8px;font-size:11px;color:#f2f2f2;font-weight:bold;transform:scaleX(0.900);">Home</span>
<span class="t" id="t6" style="left:91.5px;top:40.8px;font-size:11px;color:#f2f2f2;font-weight:normal;transform:scaleX(0.854);">Insert</span>
<span class="t" id="t7" style="left:131px;top:40.8px;font-size:11px;color:#f2f2f2;font-weight:normal;transform:scaleX(0.876);">Draw</span>
<span class="t" id="t8" style="left:169px;top:40.8px;font-size:11px;color:#f2f2f2;font-weight:normal;transform:scaleX(0.858);">Page Layout</span>
<span class="t" id="t9" style="left:238.5px;top:40.8px;font-size:11px;color:#f2f2f2;font-weight:normal;transform:scaleX(0.873);">Formulas</span>
<span class="t" id="t10" style="left:293.5px;top:40.8px;font-size:11px;color:#f2f2f2;font-weight:normal;transform:scaleX(0.882);">Data</span>
<span class="t" id="t11" style="left:328.5px;top:40.8px;font-size:11px;color:#f2f2f2;font-weight:normal;transform:scaleX(0.845);">Review</span>
<span class="t" id="t12" style="left:374px;top:40.8px;font-size:11px;color:#f2f2f2;font-weight:normal;transform:scaleX(0.888);">View</span>
<span class="t" id="t13" style="left:410px;top:40.8px;font-size:11px;color:#f2f2f2;font-weight:normal;transform:scaleX(0.897);">Developer</span>
<span class="t" id="t14" style="left:470.5px;top:40.8px;font-size:11px;color:#f2f2f2;font-weight:normal;transform:scaleX(0.906);">Help</span>
<span class="t" id="t15" style="left:540px;top:40.8px;font-size:11px;color:#f2f2f2;font-weight:normal;transform:scaleX(0.921);">Tell me what you want to do</span>
<span class="t" id="t16" style="left:18px;top:90.5px;font-size:9.8px;color:#f2f2f2;font-weight:normal;transform:scaleX(0.818);">Paste</span>
<span class="t" id="t17" style="left:20.7px;top:120.0px;font-size:9.5px;color:#f2f2f2;font-weight:normal;transform:scaleX(0.843);">Clipboard</span>
<span class="t" id="t18" style="left:185.2px;top:70.6px;font-size:9.3px;color:#686868;font-weight:normal;transform:scaleX(0.812);">14</span>
<span class="t" id="t19" style="left:219.7px;top:68.0px;font-size:12.5px;color:#dcdcdc;font-weight:normal;transform:scaleX(0.995);">A</span>
<span class="t" id="t20" style="left:240.6px;top:69.6px;font-size:10.8px;color:#dcdcdc;font-weight:normal;transform:scaleX(0.986);">A</span>
<span class="t" id="t21" style="left:94.7px;top:93.3px;font-size:10.2px;color:#cfcfcf;font-weight:bold;transform:scaleX(0.747);">B</span>
<span class="t" id="t22" style="left:114.9px;top:93.0px;font-size:10.8px;color:#cfcfcf;font-weight:normal;transform:scaleX(1.191);font-family:'Liberation Serif',serif;font-style:italic;">I</span>
<span class="t" id="t23" style="left:133px;top:93.3px;font-size:10.2px;color:#cfcfcf;font-weight:normal;transform:scaleX(0.910);">U</span>
<span class="t" id="t24" style="left:229.8px;top:91.0px;font-size:12px;color:#d6d6d6;font-weight:normal;transform:scaleX(0.986);">A</span>
<span class="t" id="t25" style="left:156.7px;top:120.0px;font-size:9.5px;color:#f2f2f2;font-weight:normal;transform:scaleX(0.831);">Font</span>
<span class="t" id="t26" style="left:327.6px;top:68.8px;font-size:8.5px;color:#c6c6c6;font-weight:normal;transform-origin:50% 50%;transform:rotate(-45deg) scaleX(0.9);">ab</span>
<span class="t" id="t27" style="left:377.6px;top:68.0px;font-size:8.5px;color:#d0d0d0;font-weight:normal;transform:scaleX(0.961);">ab</span>
<span class="t" id="t28" style="left:377.8px;top:74.0px;font-size:8.5px;color:#d0d0d0;font-weight:normal;transform:scaleX(0.988);">c</span>
<span class="t" id="t29" style="left:310px;top:120.0px;font-size:9.5px;color:#f2f2f2;font-weight:normal;transform:scaleX(0.864);">Alignment</span>
<span class="t" id="t30" style="left:417.5px;top:63.9px;font-size:9.8px;color:#676767;font-weight:normal;transform:scaleX(0.846);">General</span>
<span class="t" id="t31" style="left:450px;top:81.8px;font-size:14px;color:#e2e2e2;font-weight:normal;transform:scaleX(0.923);">%</span>
<span class="t" id="t32" style="left:471.8px;top:61.4px;font-size:32px;color:#e2e2e2;font-weight:bold;font-family:'Liberation Serif',serif;">,</span>
<span class="t" id="t33" style="left:426.4px;top:101.9px;font-size:7.6px;color:#d0d0d0;font-weight:normal;transform:scaleX(0.945);">0</span>
<span class="t" id="t34" style="left:420.2px;top:108.0px;font-size:7.6px;color:#d0d0d0;font-weight:normal;transform:scaleX(0.966);">.00</span>
<span class="t" id="t35" style="left:439.6px;top:101.9px;font-size:7.6px;color:#d0d0d0;font-weight:normal;transform:scaleX(0.966);">.00</span>
<span class="t" id="t36" style="left:445.8px;top:108.0px;font-size:7.6px;color:#d0d0d0;font-weight:normal;transform:scaleX(0.945);">0</span>
<span class="t" id="t37" style="left:428.7px;top:120.0px;font-size:9.5px;color:#f2f2f2;font-weight:normal;transform:scaleX(0.867);">Number</span>
<span class="t" id="t38" style="left:515px;top:64.1px;font-size:9.8px;color:#6e6e6e;font-weight:normal;transform:scaleX(0.938);">Conditional Formatting</span>
<span class="t" id="t39" style="left:515px;top:83.9px;font-size:9.8px;color:#6e6e6e;font-weight:normal;transform:scaleX(0.892);">Format as Table</span>
<span class="t" id="t40" style="left:515px;top:103.5px;font-size:9.8px;color:#6e6e6e;font-weight:normal;transform:scaleX(0.853);">Cell Styles</span>
<span class="t" id="t41" style="left:549.5px;top:120.0px;font-size:9.5px;color:#f2f2f2;font-weight:normal;transform:scaleX(0.773);">Styles</span>
<span class="t" id="t42" style="left:653.7px;top:64.1px;font-size:9.8px;color:#6e6e6e;font-weight:normal;transform:scaleX(0.910);">Insert</span>
<span class="t" id="t43" style="left:653.7px;top:83.9px;font-size:9.8px;color:#6e6e6e;font-weight:normal;transform:scaleX(0.893);">Delete</span>
<span class="t" id="t44" style="left:653.7px;top:103.5px;font-size:9.8px;color:#6e6e6e;font-weight:normal;transform:scaleX(0.928);">Format</span>
<span class="t" id="t45" style="left:657.5px;top:120.0px;font-size:9.5px;color:#f2f2f2;font-weight:normal;transform:scaleX(0.781);">Cells</span>
<span class="t" id="t46" style="left:713.2px;top:61.2px;font-size:15.5px;color:#e6e6e6;font-weight:normal;">&Sigma;</span>
<span class="t" id="t47" style="left:7.8px;top:143.8px;font-size:12.5px;color:#f2f2f2;font-weight:normal;transform:scaleX(0.815);">EXP</span>
<span class="t" id="t48" style="left:137px;top:142.6px;font-size:14px;color:#f2f2f2;font-weight:normal;transform:scaleX(1.388);font-family:'Liberation Serif',serif;font-style:italic;">f</span>
<span class="t" id="t49" style="left:142.8px;top:145.6px;font-size:11.5px;color:#f2f2f2;font-weight:normal;transform:scaleX(0.939);font-family:'Liberation Serif',serif;font-style:italic;">x</span>
<span class="t" id="t50" style="left:164px;top:144.0px;font-size:13px;color:#f5f5f5;font-weight:normal;transform:scaleX(0.925);">=INDEX(D4:J4,MATCH(FALSE,ISBLANK(D4:J4),5))</span>
<span class="t" id="t51" style="left:51.25px;top:187.4px;font-size:13.5px;color:#f0f0f0;font-weight:normal;transform:scaleX(0.887);">B</span>
<span class="t" id="t52" style="left:115.5px;top:187.4px;font-size:13.5px;color:#f0f0f0;font-weight:normal;transform:scaleX(0.923);">C</span>
<span class="t" id="t53" style="left:180.25px;top:187.4px;font-size:13.5px;color:#f0f0f0;font-weight:normal;transform:scaleX(0.974);">D</span>
<span class="t" id="t54" style="left:246.3px;top:187.4px;font-size:13.5px;color:#f0f0f0;font-weight:normal;transform:scaleX(0.832);">E</span>
<span class="t" id="t55" style="left:311.55px;top:187.4px;font-size:13.5px;color:#f0f0f0;font-weight:normal;transform:scaleX(0.848);">F</span>
<span class="t" id="t56" style="left:393.75px;top:187.4px;font-size:13.5px;color:#f0f0f0;font-weight:normal;transform:scaleX(0.951);">G</span>
<span class="t" id="t57" style="left:477.75px;top:187.4px;font-size:13.5px;color:#f0f0f0;font-weight:normal;transform:scaleX(0.974);">H</span>
<span class="t" id="t58" style="left:546.5px;top:187.4px;font-size:13.5px;color:#f0f0f0;font-weight:normal;">I</span>
<span class="t" id="t59" style="left:609.75px;top:187.4px;font-size:13.5px;color:#f0f0f0;font-weight:normal;transform:scaleX(0.741);">J</span>
<span class="t" id="t60" style="left:671.5px;top:187.4px;font-size:13.5px;color:#f0f0f0;font-weight:normal;transform:scaleX(0.943);">K</span>
<span class="t" id="t61" style="left:7.3px;top:206.1px;font-size:13.5px;color:#f0f0f0;font-weight:normal;transform:scaleX(0.905);">1</span>
<span class="t" id="t62" style="left:7.3px;top:224.9px;font-size:13.5px;color:#f0f0f0;font-weight:normal;transform:scaleX(0.905);">2</span>
<span class="t" id="t63" style="left:7.3px;top:243.7px;font-size:13.5px;color:#f0f0f0;font-weight:normal;transform:scaleX(0.905);">3</span>
<span class="t" id="t64" style="left:7.3px;top:262.4px;font-size:13.5px;color:#f0f0f0;font-weight:normal;transform:scaleX(0.905);">4</span>
<span class="t" id="t65" style="left:7.3px;top:281.2px;font-size:13.5px;color:#f0f0f0;font-weight:normal;transform:scaleX(0.905);">5</span>
<span class="t" id="t66" style="left:7.3px;top:300.0px;font-size:13.5px;color:#f0f0f0;font-weight:normal;transform:scaleX(0.905);">6</span>
<span class="t" id="t67" style="left:7.3px;top:318.9px;font-size:13.5px;color:#f0f0f0;font-weight:normal;transform:scaleX(0.905);">7</span>
<span class="t" id="t68" style="left:7.3px;top:337.6px;font-size:13.5px;color:#f0f0f0;font-weight:normal;transform:scaleX(0.905);">8</span>
<span class="t" id="t69" style="left:7.3px;top:356.4px;font-size:13.5px;color:#f0f0f0;font-weight:normal;transform:scaleX(0.905);">9</span>
<span class="t" id="t70" style="left:3.7px;top:375.2px;font-size:13.5px;color:#f0f0f0;font-weight:normal;transform:scaleX(0.931);">10</span>
<span class="t" id="t71" style="left:3.7px;top:394.0px;font-size:13.5px;color:#f0f0f0;font-weight:normal;">11</span>
<span class="t" id="t72" style="left:3.7px;top:412.9px;font-size:13.5px;color:#f0f0f0;font-weight:normal;transform:scaleX(0.931);">12</span>
<span class="t" id="t73" style="left:3.7px;top:431.6px;font-size:13.5px;color:#f0f0f0;font-weight:normal;transform:scaleX(0.931);">13</span>
<span class="t" id="t74" style="left:3.7px;top:450.4px;font-size:13.5px;color:#f0f0f0;font-weight:normal;transform:scaleX(0.931);">14</span>
<span class="t" id="t75" style="left:220px;top:261.6px;font-size:13.5px;color:#0a0a0a;font-weight:normal;transform:scaleX(0.899);-webkit-text-stroke:0.25px;">Air Fryer</span>
<span class="t" id="t76" style="left:349.8px;top:261.6px;font-size:13.5px;color:#0a0a0a;font-weight:normal;transform:scaleX(0.925);-webkit-text-stroke:0.25px;">Dish Washer</span>
<span class="t" id="t77" style="left:452px;top:261.6px;font-size:13.5px;color:#0a0a0a;font-weight:normal;transform:scaleX(0.943);-webkit-text-stroke:0.25px;">Air purifier</span>
<span class="t" id="t78" style="left:90.5px;top:299.2px;font-size:13.5px;color:#0a0a0a;font-weight:normal;transform:scaleX(0.888);-webkit-text-stroke:0.25px;">=INDEX(<span style="color:#4f9fe0">D4:J4</span>,MATCH<span style="color:#e39a5c">(</span>FALSE,ISBLANK<span style="color:#8f7fd8">(</span><span style="color:#4f9fe0">D4:J4</span><span style="color:#8f7fd8">)</span>,5<span style="color:#e39a5c">)</span>)</span>
<span class="t" id="t79" style="left:87.5px;top:474.1px;font-size:11px;color:#f0f0f0;font-weight:normal;transform:scaleX(0.897);">Sheet1</span>
<span class="t" id="t80" style="left:138.7px;top:474.1px;font-size:11px;color:#f0f0f0;font-weight:normal;transform:scaleX(0.912);">Sheet2</span>
<span class="t" id="t81" style="left:189.5px;top:471.7px;font-size:11px;color:#1a1a1a;font-weight:bold;transform:scaleX(0.901);">Sheet3</span>
<span class="t" id="t82" style="left:6.2px;top:495.9px;font-size:8.5px;color:#e8e8e8;font-weight:normal;transform:scaleX(0.853);">Edit</span>
<span class="t" id="t83" style="left:79px;top:495.9px;font-size:8.5px;color:#f0f0f0;font-weight:bold;transform:scaleX(0.933);">Accessibility: Investigate</span>
</body></html>
